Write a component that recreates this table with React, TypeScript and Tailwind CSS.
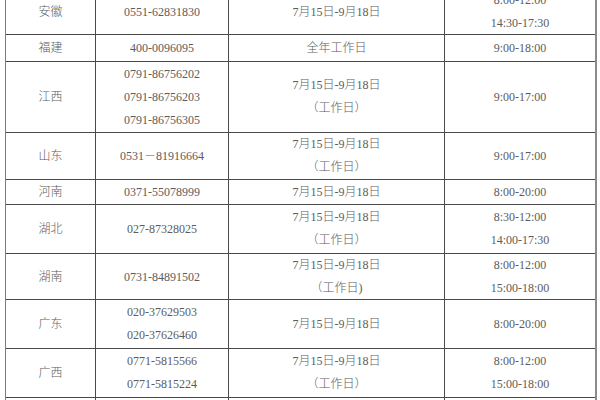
type Row = {
  province: string;
  phones: string[];
  dates: string[];
  times: string[];
  h: string;
};

const rows: Row[] = [
  { province: "安徽", phones: ["0551-62831830"], dates: ["7月15日-9月18日"], times: ["8:00-12:00", "14:30-17:30"], h: "h-[46px]" },
  { province: "福建", phones: ["400-0096095"], dates: ["全年工作日"], times: ["9:00-18:00"], h: "h-[27px]" },
  { province: "江西", phones: ["0791-86756202", "0791-86756203", "0791-86756305"], dates: ["7月15日-9月18日", "（工作日）"], times: ["9:00-17:00"], h: "h-[71px]" },
  { province: "山东", phones: ["0531－81916664"], dates: ["7月15日-9月18日", "（工作日）"], times: ["9:00-17:00"], h: "h-[47px]" },
  { province: "河南", phones: ["0371-55078999"], dates: ["7月15日-9月18日"], times: ["8:00-20:00"], h: "h-[25px]" },
  { province: "湖北", phones: ["027-87328025"], dates: ["7月15日-9月18日", "（工作日）"], times: ["8:30-12:00", "14:00-17:30"], h: "h-[49px]" },
  { province: "湖南", phones: ["0731-84891502"], dates: ["7月15日-9月18日", "（工作日)"], times: ["8:00-12:00", "15:00-18:00"], h: "h-[46px]" },
  { province: "广东", phones: ["020-37629503", "020-37626460"], dates: ["7月15日-9月18日"], times: ["8:00-20:00"], h: "h-[49px]" },
  { province: "广西", phones: ["0771-5815566", "0771-5815224"], dates: ["7月15日-9月18日", "（工作日）"], times: ["8:00-12:00", "15:00-18:00"], h: "h-[49px]" },
  // next row starts just above the bottom edge; only its top line shows
  { province: "", phones: [], dates: [], times: [], h: "h-[26px]" },
];

function Cell({ lines, first }: { lines: string[]; first?: boolean }) {
  return (
    <div
      className={`flex flex-col items-center justify-center ${first ? "" : "border-l border-[#4a4a4a]"}`}
    >
      {lines.map((l, i) => (
        <div key={i} className="leading-[23px] whitespace-nowrap">
          {l}
        </div>
      ))}
    </div>
  );
}

export default function App() {
  return (
    <div className="w-[600px] h-[400px] overflow-hidden bg-white">
      <div
        className="ml-[5px] mt-[-12px] w-[592px] border-l border-r-2 border-t border-l-[#7a7a7a] border-r-[#8a8a8a] border-t-[#4a4a4a] text-[12px] font-light text-[#5c5c5c]"
        style={{ fontFamily: '"Liberation Serif", "Noto Sans CJK SC", serif' }}
      >
        {rows.map((r, i) => (
          <div
            key={i}
            className={`grid grid-cols-[89px_133px_216px_151px] border-b border-[#4a4a4a] box-border ${r.h}`}
          >
            <Cell lines={r.province ? [r.province] : []} first />
            <Cell lines={r.phones} />
            <Cell lines={r.dates} />
            <Cell lines={r.times} />
          </div>
        ))}
      </div>
    </div>
  );
}
